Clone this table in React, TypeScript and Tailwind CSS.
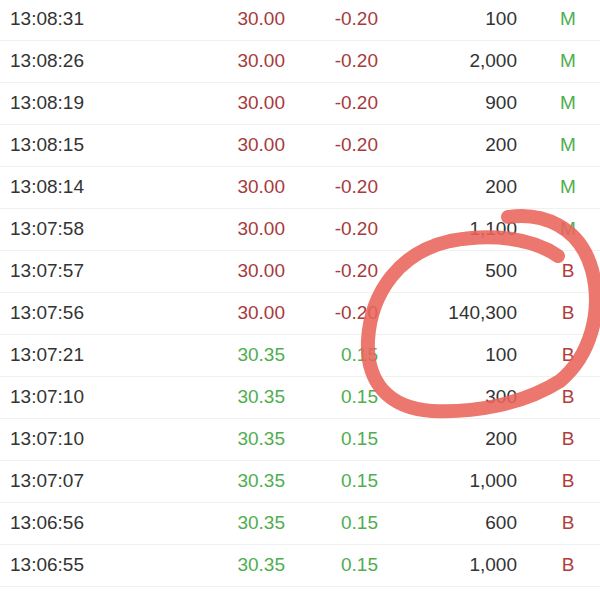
import React from 'react';

type Trade = { time: string; price: string; change: string; vol: string; side: 'M' | 'B' };

const trades: Trade[] = [
    { time: '13:08:31', price: '30.00', change: '-0.20', vol: '100', side: 'M' },
    { time: '13:08:26', price: '30.00', change: '-0.20', vol: '2,000', side: 'M' },
    { time: '13:08:19', price: '30.00', change: '-0.20', vol: '900', side: 'M' },
    { time: '13:08:15', price: '30.00', change: '-0.20', vol: '200', side: 'M' },
    { time: '13:08:14', price: '30.00', change: '-0.20', vol: '200', side: 'M' },
    { time: '13:07:58', price: '30.00', change: '-0.20', vol: '1,100', side: 'M' },
    { time: '13:07:57', price: '30.00', change: '-0.20', vol: '500', side: 'B' },
    { time: '13:07:56', price: '30.00', change: '-0.20', vol: '140,300', side: 'B' },
    { time: '13:07:21', price: '30.35', change: '0.15', vol: '100', side: 'B' },
    { time: '13:07:10', price: '30.35', change: '0.15', vol: '300', side: 'B' },
    { time: '13:07:10', price: '30.35', change: '0.15', vol: '200', side: 'B' },
    { time: '13:07:07', price: '30.35', change: '0.15', vol: '1,000', side: 'B' },
    { time: '13:06:56', price: '30.35', change: '0.15', vol: '600', side: 'B' },
    { time: '13:06:55', price: '30.35', change: '0.15', vol: '1,000', side: 'B' },
    { time: '13:06:54', price: '30.35', change: '0.15', vol: '21,000', side: 'M' },
];

export default function App() {
    return (
        <div className="relative w-[600px] h-[600px] overflow-hidden bg-white font-['Liberation_Sans',Arial,sans-serif] text-[19px]">
            <div className="-mt-[1px]">
                {trades.map((t, i) => {
                    const down = t.change.startsWith('-');
                    const tone = down ? 'text-[#a73a3d]' : 'text-[#4fae4f]';
                    return (
                        <div key={i} className="flex items-center h-[42px] border-b border-[#f0f0f0]">
                            <div className="w-[200px] pl-[10px] text-[#333333]">{t.time}</div>
                            <div className={`w-[85px] text-right ${tone}`}>{t.price}</div>
                            <div className={`w-[93px] text-right ${tone}`}>{t.change}</div>
                            <div className="w-[139px] text-right text-[#333333]">{t.vol}</div>
                            <div
                                className={`ml-[21px] w-[60px] text-center ${
                                    t.side === 'M' ? 'text-[#4fae4f]' : 'text-[#b23b3e]'
                                }`}
                            >
                                {t.side}
                            </div>
                        </div>
                    );
                })}
            </div>

            {/* hand-drawn marker circle */}
            <svg className="absolute inset-0 pointer-events-none" width="600" height="600" viewBox="0 0 600 600">
                <path
                    d="M 508 217 C 542 212, 580 226, 592 270 C 603 312, 590 356, 560 381 C 522 405, 472 413, 432 411 C 388 408, 366 382, 368 340 C 371 292, 400 252, 450 241 C 492 233, 532 238, 558 256"
                    fill="none"
                    stroke="#e8645a"
                    strokeWidth="14"
                    strokeLinecap="round"
                    strokeLinejoin="round"
                    opacity="0.88"
                />
            </svg>
        </div>
    );
}
